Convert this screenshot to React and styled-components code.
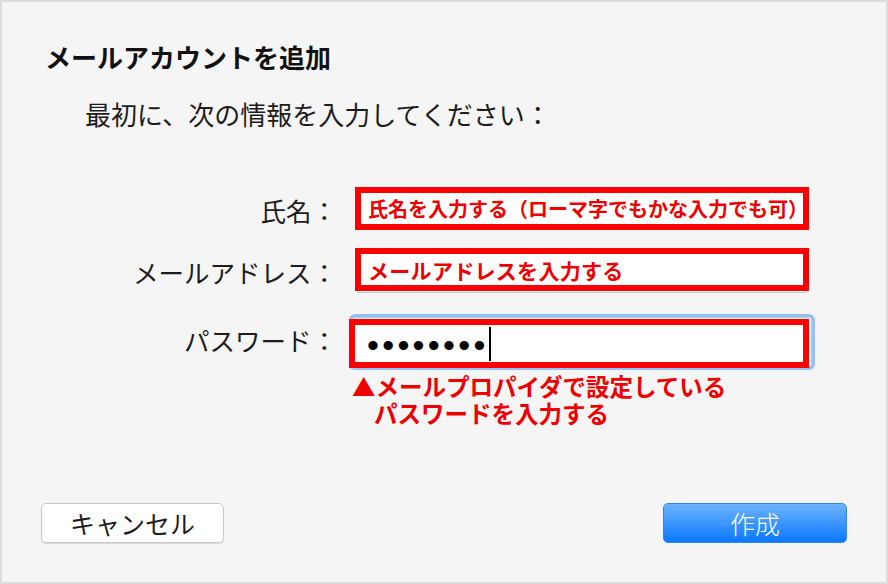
import React from 'react'
import styled, { createGlobalStyle } from 'styled-components'

const GlobalStyle = createGlobalStyle`
  html, body {
    margin: 0;
    padding: 0;
    background: #f5f5f5;
  }
  body {
    font-family: "Noto Sans CJK JP", "Noto Sans", sans-serif;
    color: #1c1c1c;
  }
`

const Dialog = styled.div`
  width: 888px;
  height: 584px;
  box-sizing: border-box;
  border: 2px solid #dcdcdc;
  background: #f5f5f5;
  display: flex;
  flex-direction: column;
  padding-top: 42px;
`

const Title = styled.h1`
  margin: 0 0 0 43px;
  font-size: 26px;
  line-height: 26px;
  font-weight: 700;
  color: #111;
`

const Lead = styled.p`
  margin: 31px 0 0 83px;
  font-size: 26px;
  line-height: 26px;
  font-weight: 400;
  color: #1c1c1c;
`

const Form = styled.div`
  margin: 60px 0 0 43px;
  display: flex;
  flex-direction: column;
`

const Row = styled.div`
  display: flex;
  align-items: center;
  gap: 18px;
  margin-top: ${p => p.$top || 0}px;
`

const Label = styled.label`
  width: 292px;
  text-align: right;
  font-size: 25.5px;
  line-height: 30px;
  color: #1c1c1c;
  margin-top: ${p => p.$shift || 0}px;
`

const Field = styled.div`
  position: relative;
  width: 454px;
  height: ${p => p.$h}px;
`

const Input = styled.div`
  position: absolute;
  left: ${p => p.$x}px;
  top: ${p => p.$y}px;
  width: ${p => p.$w}px;
  height: ${p => p.$h}px;
  box-sizing: border-box;
  background: #fff;
  border: 1px solid #c6c6c6;
  border-radius: ${p => (p.$focus ? 3 : 1)}px;
  box-shadow: ${p => (p.$focus ? '0 0 0 3px #93c1f6' : 'none')};
`

// red annotation frame drawn over the input
const Frame = styled.div`
  position: absolute;
  left: ${p => p.$x || 0}px;
  top: ${p => p.$y || 0}px;
  width: ${p => p.$w}px;
  height: ${p => p.$h}px;
  box-sizing: border-box;
  border: 6px solid #ff0000;
  background: #fff;
  display: flex;
  align-items: center;
  padding-left: ${p => p.$pad || 7}px;
`

const Hint = styled.span`
  color: #ee0000;
  font-size: ${p => p.$size || 20}px;
  font-weight: 700;
  white-space: nowrap;
  letter-spacing: ${p => p.$ls || 0}px;
`

const Dots = styled.span`
  font-family: "Liberation Sans", Arial, sans-serif;
  font-size: 34px;
  line-height: 34px;
  letter-spacing: 3.3px;
  color: #000;
  margin-top: 2px;
`

const Caret = styled.span`
  display: inline-block;
  width: 2px;
  height: 34px;
  background: #000;
  margin-left: 0;
`

const Note = styled.div`
  margin: 5px 0 0 350px;
  color: #ee0000;
  font-size: 23.5px;
  line-height: 27px;
  font-weight: 700;
`

const NoteLine = styled.div`
  padding-left: ${p => p.$indent || 0}px;
  white-space: nowrap;
`

const Footer = styled.div`
  margin-top: auto;
  padding: 0 39px 39px 39px;
  display: flex;
  justify-content: space-between;
`

const Button = styled.button`
  width: ${p => p.$w}px;
  height: 40px;
  box-sizing: border-box;
  border-radius: 5px;
  font-family: "Noto Sans CJK JP", sans-serif;
  font-size: 25px;
  line-height: 1;
  padding: 0;
  cursor: pointer;
  ${p =>
    p.$primary
      ? `
    background: linear-gradient(#6db3fb, #0b78fe);
    border: 1px solid #2d86f5;
    color: #fff;
    font-weight: 300;
  `
      : `
    background: #fff;
    border: 1px solid #c9c9c9;
    box-shadow: 0 1px 1px rgba(0,0,0,0.12);
    color: #1c1c1c;
    font-weight: 400;
  `}
`

export default function App() {
  return (
    <>
      <GlobalStyle />
      <Dialog>
        <Title>メールアカウントを追加</Title>
        <Lead>最初に、次の情報を入力してください：</Lead>
        <Form>
          <Row>
            <Label $shift={3}>氏名：</Label>
            <Field $h={43}>
              <Input $x={0} $y={0} $w={454} $h={43} />
              <Frame $w={454} $h={43}>
                <Hint $size={20}>氏名を入力する（ローマ字でもかな入力でも可）</Hint>
              </Frame>
            </Field>
          </Row>
          <Row $top={18}>
            <Label $shift={3}>メールアドレス：</Label>
            <Field $h={45}>
              <Input $x={2} $y={0} $w={450} $h={45} />
              <Frame $w={454} $h={43}>
                <Hint $size={21} $ls={0.3}>メールアドレスを入力する</Hint>
              </Frame>
            </Field>
          </Row>
          <Row $top={21}>
            <Label $shift={-3}>パスワード：</Label>
            <Field $h={54}>
              <Input $x={-3} $y={3} $w={460} $h={50} $focus />
              <Frame $x={-6} $y={5} $w={460} $h={49} $pad={12}>
                <Dots>••••••••</Dots>
                <Caret />
              </Frame>
            </Field>
          </Row>
        </Form>
        <Note>
          <NoteLine>▲メールプロパイダで設定している</NoteLine>
          <NoteLine $indent={22}>パスワードを入力する</NoteLine>
        </Note>
        <Footer>
          <Button $w={183}>キャンセル</Button>
          <Button $w={184} $primary>作成</Button>
        </Footer>
      </Dialog>
    </>
  )
}
